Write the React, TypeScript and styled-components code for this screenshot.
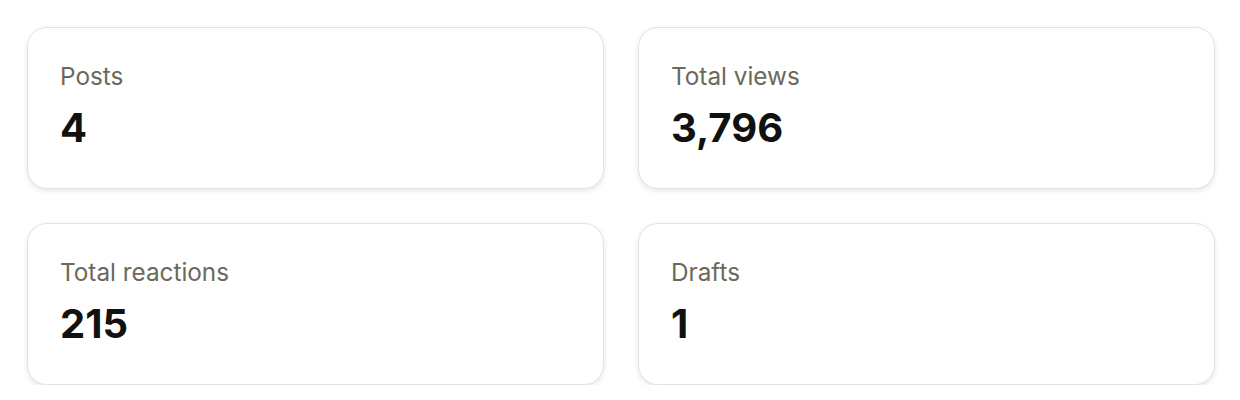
import styled, { createGlobalStyle } from 'styled-components';

const STATS = [
  { label: 'Posts', value: '4' },
  { label: 'Total views', value: '3,796' },
  { label: 'Total reactions', value: '215' },
  { label: 'Drafts', value: '1' },
];

export default function App() {
  return (
    <>
      <GlobalStyle />
      <Grid>
        {STATS.map((stat) => (
          <Card key={stat.label}>
            <Label>{stat.label}</Label>
            <Value>{stat.value}</Value>
          </Card>
        ))}
      </Grid>
    </>
  );
}

const GlobalStyle = createGlobalStyle`
  body {
    margin: 0;
    background: #fff;
    font-family: Inter, 'Noto Sans', sans-serif;
  }
`;

// LAYOUT
const Grid = styled.div`
  display: grid;
  grid-template-columns: 1fr 1fr;
  column-gap: 34px;
  row-gap: 34px;
  padding: 27px 25px 0 27px;
`;

// CARD
const Card = styled.div`
  box-sizing: border-box;
  height: 162px;
  padding: 34px 32px 0;
  border: 1.5px solid #e4e3dd;
  border-radius: 20px;
  background: #fff;
  box-shadow: 0 2px 5px rgba(60, 55, 40, 0.12);
  display: flex;
  flex-direction: column;
  gap: 14px;
`;

const Label = styled.div`
  font-size: 24.3px;
  line-height: 28px;
  color: #6b6959;
`;

const Value = styled.div`
  font-size: 40px;
  line-height: 48px;
  font-weight: 700;
  color: #111110;
`;
